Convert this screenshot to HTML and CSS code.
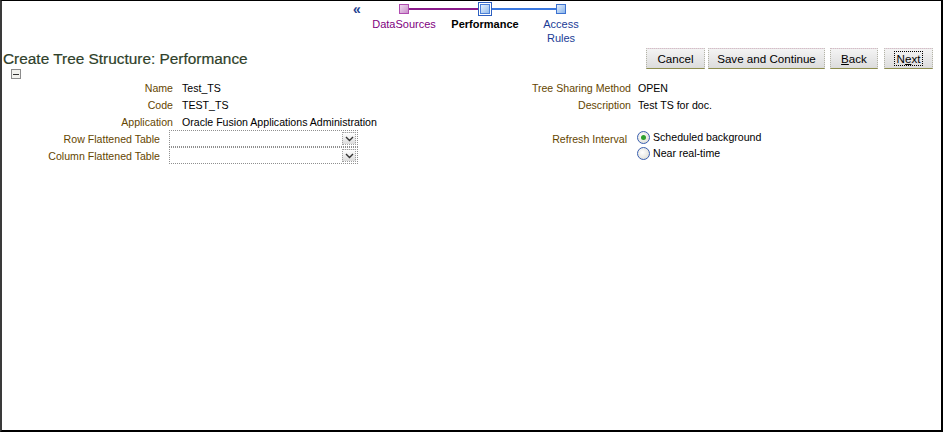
FILE: index.html
```html
<!DOCTYPE html>
<html>
<head>
<meta charset="utf-8">
<link rel="stylesheet" href="styles.css">
</head>
<body>
<div class="frame">
  <div class="train">
    <span class="train-back">«</span>
    <div class="steps">
      <div class="step step-1">
        <div class="stop-row"><span class="seg"></span><span class="stop stop-visited"></span><span class="seg seg-purple"></span></div>
        <div class="step-label label-visited">DataSources</div>
      </div>
      <div class="step step-2">
        <div class="stop-row"><span class="seg seg-purple"></span><span class="stop stop-current"><span class="stop-inner"></span></span><span class="seg seg-blue"></span></div>
        <div class="step-label label-current">Performance</div>
      </div>
      <div class="step step-3">
        <div class="stop-row"><span class="seg seg-blue"></span><span class="stop stop-next"></span><span class="seg"></span></div>
        <div class="step-label label-next">Access<br>Rules</div>
      </div>
    </div>
  </div>

  <div class="header-row">
    <h1 class="title">Create Tree Structure: Performance</h1>
    <div class="buttons">
      <button class="btn btn-cancel">Cancel</button>
      <button class="btn btn-save">Save and Continue</button>
      <button class="btn btn-back"><u>B</u>ack</button>
      <button class="btn btn-next"><span class="focus">N<u>e</u>xt</span></button>
    </div>
  </div>

  <div class="toggle-row"><span class="toggle"><span class="toggle-minus"></span></span></div>

  <div class="form">
    <div class="grid grid-left">
      <div class="lbl">Name</div><div class="val">Test_TS</div>
      <div class="lbl">Code</div><div class="val">TEST_TS</div>
      <div class="lbl">Application</div><div class="val">Oracle Fusion Applications Administration</div>
      <div class="lbl lbl-field">Row Flattened Table</div>
      <div class="val val-field"><div class="select"><span class="select-btn"><svg width="9" height="6" viewBox="0 0 9 6"><path d="M1 1 L4.5 4.5 L8 1" fill="none" stroke="#333" stroke-width="1.4"/></svg></span></div></div>
      <div class="lbl lbl-field">Column Flattened Table</div>
      <div class="val val-field"><div class="select"><span class="select-btn"><svg width="9" height="6" viewBox="0 0 9 6"><path d="M1 1 L4.5 4.5 L8 1" fill="none" stroke="#333" stroke-width="1.4"/></svg></span></div></div>
    </div>
    <div class="grid grid-right">
      <div class="lbl">Tree Sharing Method</div><div class="val">OPEN</div>
      <div class="lbl">Description</div><div class="val">Test TS for doc.</div>
      <div class="lbl empty"></div><div class="val empty"></div>
      <div class="lbl lbl-radio">Refresh Interval</div>
      <div class="val val-radios">
        <div class="radio-row"><span class="radio radio-on"><span class="radio-dot"></span></span>Scheduled background</div>
        <div class="radio-row"><span class="radio"></span>Near real-time</div>
      </div>
    </div>
  </div>
</div>
</body>
</html>
```

FILE: styles.css
```css
html, body {
  margin: 0;
  padding: 0;
  background: #fff;
}

.frame {
  width: 943px;
  height: 432px;
  box-sizing: border-box;
  border-top: 1px solid #000;
  border-left: 2px solid #3a3a3a;
  border-right: 2px solid #000;
  border-bottom: 2px solid #000;
  font-family: "Liberation Sans", Arial, sans-serif;
  font-size: 10.6px;
  color: #000;
  display: flex;
  flex-direction: column;
}

/* ---------- train ---------- */
.train {
  display: flex;
  align-items: flex-start;
  height: 46px;
  padding-left: 351px;
}

.train-back {
  color: #1d3f8f;
  font-size: 14px;
  font-weight: bold;
  line-height: 14px;
  margin-top: 1px;
  width: 11px;
}

.steps {
  display: flex;
}

.step {
  display: flex;
  flex-direction: column;
  align-items: center;
}
.step-1 { width: 80px; }
.step-2 { width: 82px; }
.step-3 { width: 70px; }

.stop-row {
  display: flex;
  align-items: center;
  width: 100%;
  height: 15px;
}

.seg {
  flex: 1;
  height: 2px;
}
.seg-purple { background: #8a1a8a; }
.seg-blue { background: #3a78e0; }

.stop {
  width: 8px;
  height: 8px;
  flex: none;
}
.stop-visited {
  border: 1px solid #b04cb0;
  background: linear-gradient(135deg, #efd9ef, #c98fc9);
}
.stop-next {
  border: 1px solid #3d72d0;
  background: linear-gradient(135deg, #e2eefc, #8ab4ea);
}
.stop-current {
  width: 10px;
  height: 10px;
  border: 1px solid #2d5fc0;
  padding: 1px;
  background: #fff;
  display: flex;
}
.stop-inner {
  flex: 1;
  border: 1px solid #4a7fd8;
  background: linear-gradient(135deg, #e6f0fc, #93bbec);
}

.step-label {
  text-align: center;
  line-height: 14px;
  margin-top: 1px;
  font-size: 11px;
}
.label-visited { color: #800080; }
.label-current { color: #000; font-weight: bold; }
.label-next { color: #1a3c96; }

/* ---------- header ---------- */
.header-row {
  display: flex;
  align-items: center;
  justify-content: space-between;
  height: 22px;
  padding-left: 1px;
  padding-right: 8px;
}

.title {
  margin: 0;
  font-size: 15.4px;
  font-weight: normal;
  color: #2f3f2a;
  line-height: 18px;
  margin-top: 1px;
  -webkit-text-stroke: 0.2px #2f3f2a;
}

.buttons {
  display: flex;
  gap: 3px;
  margin-top: 0;
}

.btn {
  font-family: "Liberation Sans", Arial, sans-serif;
  font-size: 11.6px;
  color: #000;
  height: 21px;
  padding: 0;
  white-space: nowrap;
  border: 1px dotted #b3b3a6;
  border-bottom: 1px solid #8e8e4e;
  border-top: 1px dotted #d9b9c7;
  background: linear-gradient(#f4f4f4, #dcdcdc);
  line-height: 17px;
  cursor: default;
}
.btn u { text-decoration: underline; }
.btn-cancel { width: 59px; }
.btn-save { width: 117px; }
.btn-back { width: 48px; margin-left: 2px; }
.btn-next { width: 49px; margin-left: 3px; }
.btn-next .focus {
  border: 1px dotted #000;
  padding: 0 2px;
}

/* ---------- toggle ---------- */
.toggle-row {
  height: 11px;
  padding-left: 9px;
  padding-top: 0;
}
.toggle {
  display: flex;
  align-items: center;
  justify-content: center;
  width: 8px;
  height: 8px;
  border: 1px solid #8c8c8c;
  background: #f2f2ee;
}
.toggle-minus {
  width: 6px;
  height: 1px;
  background: #333;
}

/* ---------- form ---------- */
.form {
  display: flex;
  padding-top: 0;
}

.grid {
  display: grid;
  grid-auto-rows: 17px;
  grid-template-rows: 16px;
  align-items: center;
}
.grid-left {
  width: 458px;
  grid-template-columns: 171px 1fr;
}
.grid-right {
  grid-template-columns: 171px 1fr;
}

.lbl {
  text-align: right;
  color: #654600;
  white-space: nowrap;
}
.grid-left .val { padding-left: 9px; white-space: nowrap; }
.grid-right .val { padding-left: 7px; white-space: nowrap; }

.lbl-field { padding-right: 13px; }
.lbl-radio { padding-right: 4px; }
.grid-left .val-field { padding-left: 0; margin-left: -4px; }

.select {
  width: 186px;
  height: 15px;
  border: 1px dotted #8f8f8f;
  background: #fff;
  display: flex;
  justify-content: flex-end;
  align-items: center;
  padding-right: 1px;
}
.select-btn {
  width: 12px;
  height: 11px;
  border: 1px dotted #a0a0a0;
  background: linear-gradient(#ffffff, #dcdcdc);
  display: flex;
  align-items: center;
  justify-content: center;
}

.val-radios {
  grid-row: span 2;
  align-self: start;
  margin-left: -1px;
  margin-top: -1px;
}
.radio-row {
  display: flex;
  align-items: center;
  height: 16px;
}
.radio {
  width: 11px;
  height: 11px;
  border-radius: 50%;
  border: 1px solid #3a5fb0;
  background: radial-gradient(circle at 40% 40%, #ffffff, #d8d8d0);
  margin-right: 3px;
  display: flex;
  align-items: center;
  justify-content: center;
  box-sizing: content-box;
}
.radio-dot {
  width: 5px;
  height: 5px;
  border-radius: 50%;
  background: #2ea02e;
}
```
